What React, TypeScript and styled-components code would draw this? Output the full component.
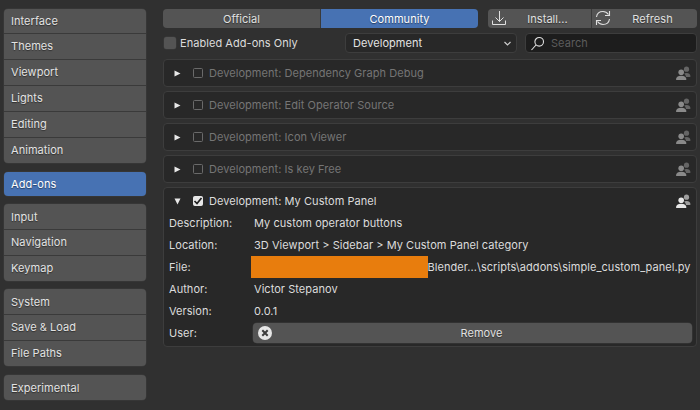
import React from "react";
import styled, { createGlobalStyle } from "styled-components";

const GlobalStyle = createGlobalStyle`
  html, body {
    margin: 0;
    padding: 0;
    background: #303030;
  }
  body {
    width: 700px;
    height: 410px;
    overflow: hidden;
    font-family: Inter, "Noto Sans", sans-serif;
    font-size: 11px;
    letter-spacing: 0.05px;
    color: #d9d9d9;
  }
`;

const Page = styled.div`
  display: grid;
  grid-template-columns: 142px 534px;
  column-gap: 17px;
  padding: 9px 3px 0 4px;
  height: 401px;
`;

const Sidebar = styled.nav`
  display: flex;
  flex-direction: column;
`;

const NavGroup = styled.div<{ $gap: number; $shortFirst?: boolean }>`
  display: flex;
  flex-direction: column;
  gap: 1px;
  margin-top: ${(p) => p.$gap}px;
  border-radius: 4px;
  overflow: hidden;
  background: #3a3a3a;
  box-shadow: 0 0 0 0.5px #3d3d3d;
  & > div:first-child {
    height: ${(p) => (p.$shortFirst ? 24 : 25)}px;
    line-height: ${(p) => (p.$shortFirst ? 24 : 26)}px;
  }
`;

const NavItem = styled.div<{ $active?: boolean }>`
  height: 25px;
  line-height: 24px;
  padding-left: 7px;
  background: ${(p) => (p.$active ? "#4772b3" : "#545454")};
  color: ${(p) => (p.$active ? "#ffffff" : "#e3e3e3")};
  text-shadow: 0 1px 1px rgba(0, 0, 0, 0.45);
`;

const Main = styled.main`
  display: flex;
  flex-direction: column;
  min-width: 0;
`;

const TopBar = styled.div`
  display: flex;
  gap: 10px;
  height: 19px;
  margin-bottom: 5px;
`;

const Segmented = styled.div<{ $width: number }>`
  display: flex;
  width: ${(p) => p.$width}px;
  gap: 1px;
  border-radius: 4px;
  overflow: hidden;
  background: #3a3a3a;
`;

const Segment = styled.div<{ $active?: boolean; $width?: number; $icon?: boolean }>`
  flex: ${(p) => (p.$width ? `0 0 ${p.$width}px` : 1)};
  display: flex;
  align-items: center;
  justify-content: center;
  position: relative;
  box-sizing: border-box;
  padding-left: ${(p) => (p.$icon ? 16 : 0)}px;
  background: ${(p) => (p.$active ? "#4772b3" : "#545454")};
  color: ${(p) => (p.$active ? "#ffffff" : "#e0e0e0")};
  text-shadow: 0 1px 1px rgba(0, 0, 0, 0.45);
  svg {
    position: absolute;
    left: 3px;
    top: 1px;
  }
`;

const FilterBar = styled.div`
  display: flex;
  align-items: center;
  height: 20px;
  margin-bottom: 6px;
`;

const EnabledToggle = styled.div`
  display: flex;
  align-items: center;
  gap: 4px;
  width: 182px;
  padding-left: 1px;
  box-sizing: border-box;
  color: #dcdcdc;
`;

const Box = styled.span`
  width: 12px;
  height: 12px;
  border-radius: 2.5px;
  background: #545454;
  box-shadow: 0 0 0 0.5px #3d3d3d;
`;

const Dropdown = styled.div`
  width: 172px;
  height: 20px;
  box-sizing: border-box;
  margin-right: 8px;
  display: flex;
  align-items: center;
  justify-content: space-between;
  padding: 0 4px 0 7px;
  background: #282828;
  border: 1px solid #3d3d3d;
  border-radius: 4px;
  color: #e3e3e3;
`;

const Search = styled.div`
  width: 172px;
  height: 20px;
  box-sizing: border-box;
  display: flex;
  align-items: center;
  gap: 6px;
  padding-left: 4px;
  background: #1d1d1d;
  border: 1px solid #3d3d3d;
  border-radius: 4px;
  color: #5c5c5c;
`;

const AddonList = styled.div`
  display: flex;
  flex-direction: column;
  gap: 4px;
`;

const Panel = styled.section`
  background: #282828;
  border: 1px solid #3d3d3d;
  border-radius: 4px;
  box-sizing: border-box;
`;

const PanelHeader = styled.div<{ $enabled?: boolean }>`
  height: 26px;
  display: flex;
  align-items: center;
  padding: 0 5px 0 10px;
  color: ${(p) => (p.$enabled ? "#dcdcdc" : "#757575")};
`;

const Arrow = styled.svg`
  width: 7px;
  height: 7px;
  margin-right: 12px;
  flex: none;
`;

const RowCheck = styled.span<{ $checked?: boolean }>`
  width: 10px;
  height: 10px;
  box-sizing: border-box;
  margin-right: 6px;
  flex: none;
  border-radius: 1.5px;
  display: flex;
  align-items: center;
  justify-content: center;
  background: ${(p) => (p.$checked ? "#e6e6e6" : "transparent")};
  border: 1px solid ${(p) => (p.$checked ? "#e6e6e6" : "#6a6a6a")};
  svg {
    flex: none;
  }
`;

const AddonName = styled.span`
  flex: 1;
`;

const Details = styled.div`
  display: flex;
  flex-direction: column;
  margin-top: -2px;
  padding: 0 4px 2px 5px;
`;

const DetailRow = styled.div`
  height: 22px;
  display: grid;
  grid-template-columns: 85px 1fr;
  align-items: center;
  color: #dcdcdc;
`;

const FileValue = styled.div`
  display: flex;
  align-items: center;
  margin-left: -3px;
  white-space: nowrap;
`;

const Redaction = styled.span`
  width: 176.5px;
  height: 22px;
  flex: none;
  background: #e87d0d;
`;

const RemoveButton = styled.div`
  height: 20px;
  margin-left: -1px;
  padding-left: 18px;
  border-radius: 4px;
  background: #545454;
  position: relative;
  display: flex;
  align-items: center;
  justify-content: center;
  color: #e0e0e0;
  text-shadow: 0 1px 1px rgba(0, 0, 0, 0.45);
  box-shadow: 0 0 0 0.5px #3d3d3d;
  svg {
    position: absolute;
    left: 5px;
    top: 3px;
  }
`;

const addons = [
  "Development: Dependency Graph Debug",
  "Development: Edit Operator Source",
  "Development: Icon Viewer",
  "Development: Is key Free",
];

const navGroups = [
  { gap: 0, shortFirst: true, items: ["Interface", "Themes", "Viewport", "Lights", "Editing", "Animation"] },
  { gap: 9, shortFirst: true, items: ["Add-ons"] },
  { gap: 8, items: ["Input", "Navigation", "Keymap"] },
  { gap: 8, items: ["System", "Save & Load", "File Paths"] },
  { gap: 9, items: ["Experimental"] },
];

const details = [
  ["Description:", "My custom operator buttons"],
  ["Location:", "3D Viewport > Sidebar > My Custom Panel category"],
];

function UserIcon({ color }: { color: string }) {
  return (
    <svg width="15" height="15" viewBox="0 0 15 15" fill={color}>
      <circle cx="10.5" cy="3.2" r="2.6" opacity="0.62" />
      <path d="M10.5 7c2.2 0 3.8 1 4 3.2 0 .5-.3.8-.8.8H10C9.800 9.500 9.200 8.300 8 7.700 8.700 7.300 9.500 7 10.500 7z" opacity="0.62" />
      <circle cx="5.200" cy="6.200" r="2.800" />
      <path d="M.5 14c-.3 0-.5-.2-.5-.5 0-2.300 1.800-3.800 5.200-3.800s5.200 1.500 5.200 3.800c0 .3-.2.500-.5.500z" />
    </svg>
  );
}

function App() {
  return (
    <>
      <GlobalStyle />
      <Page>
        <Sidebar>
          {navGroups.map((group) => (
            <NavGroup key={group.items[0]} $gap={group.gap} $shortFirst={group.shortFirst}>
              {group.items.map((name) => (
                <NavItem key={name} $active={name === "Add-ons"}>
                  {name}
                </NavItem>
              ))}
            </NavGroup>
          ))}
        </Sidebar>
        <Main>
          <TopBar>
            <Segmented $width={315}>
              <Segment>Official</Segment>
              <Segment $active>Community</Segment>
            </Segmented>
            <Segmented $width={209}>
              <Segment $width={103} $icon>
                <svg width="16" height="16" viewBox="0 0 16 16" fill="none" stroke="#e0e0e0" strokeWidth="1">
                  <path d="M8.500 1V11.500M4.500 7.500 8.500 11.500l4-4M1.500 10.500V14.500H14.500V10.500" />
                </svg>
                Install...
              </Segment>
              <Segment $icon>
                <svg width="16" height="16" viewBox="0 0 16 16" fill="none" stroke="#e0e0e0" strokeWidth="1.100">
                  <path d="M1.500 7C2 3.500 4.500 1.500 8 1.500c2.300 0 4 1 5.500 3M14.500 9c-.5 3.500-3 5.500-6.500 5.500-2.300 0-4-1-5.500-3" />
                  <path d="M14.500 1v4.500H10M1.500 15v-4.500H6" />
                </svg>
                Refresh
              </Segment>
            </Segmented>
          </TopBar>
          <FilterBar>
            <EnabledToggle>
              <Box />
              Enabled Add-ons Only
            </EnabledToggle>
            <Dropdown>
              Development
              <svg width="9" height="9" viewBox="0 0 9 9" fill="none" stroke="#cfcfcf" strokeWidth="1.200">
                <path d="M1.500 3 4.500 6l3-3" />
              </svg>
            </Dropdown>
            <Search>
              <svg width="15" height="15" viewBox="0 0 15 15" fill="none" stroke="#e0e0e0" strokeWidth="1.100">
                <circle cx="9.200" cy="5.800" r="4.300" />
                <path d="M6 9 1.500 14" />
              </svg>
              Search
            </Search>
          </FilterBar>
          <AddonList>
            {addons.map((name) => (
              <Panel key={name}>
                <PanelHeader>
                  <Arrow viewBox="0 0 7 7">
                    <path d="M0.500 0.500 6.500 3.500 0.500 6.500z" fill="#e8e8e8" />
                  </Arrow>
                  <RowCheck />
                  <AddonName>{name}</AddonName>
                  <UserIcon color="#8a8a8a" />
                </PanelHeader>
              </Panel>
            ))}
            <Panel>
              <PanelHeader $enabled>
                <Arrow viewBox="0 0 7 7">
                  <path d="M0.500 0.500H6.500L3.500 6.500z" fill="#e8e8e8" />
                </Arrow>
                <RowCheck $checked>
                  <svg width="10" height="10" viewBox="0 0 10 10" fill="none" stroke="#1f1f1f" strokeWidth="1.700">
                    <path d="M1.500 5 4 7.500 8.500 2" />
                  </svg>
                </RowCheck>
                <AddonName>Development: My Custom Panel</AddonName>
                <UserIcon color="#e6e6e6" />
              </PanelHeader>
              <Details>
                {details.map(([label, value]) => (
                  <DetailRow key={label}>
                    <span>{label}</span>
                    <span>{value}</span>
                  </DetailRow>
                ))}
                <DetailRow>
                  <span>File:</span>
                  <FileValue>
                    <Redaction />
                    Blender...\scripts\addons\simple_custom_panel.py
                  </FileValue>
                </DetailRow>
                <DetailRow>
                  <span>Author:</span>
                  <span>Victor Stepanov</span>
                </DetailRow>
                <DetailRow>
                  <span>Version:</span>
                  <span>0.0.1</span>
                </DetailRow>
                <DetailRow>
                  <span>User:</span>
                  <RemoveButton>
                    <svg width="14" height="14" viewBox="0 0 14 14">
                      <circle cx="7" cy="7" r="7" fill="#e6e6e6" />
                      <path d="M4.300 4.300 9.700 9.700M9.700 4.300 4.300 9.700" stroke="#3c3c3c" strokeWidth="2" />
                    </svg>
                    Remove
                  </RemoveButton>
                </DetailRow>
              </Details>
            </Panel>
          </AddonList>
        </Main>
      </Page>
    </>
  );
}

export default App;
